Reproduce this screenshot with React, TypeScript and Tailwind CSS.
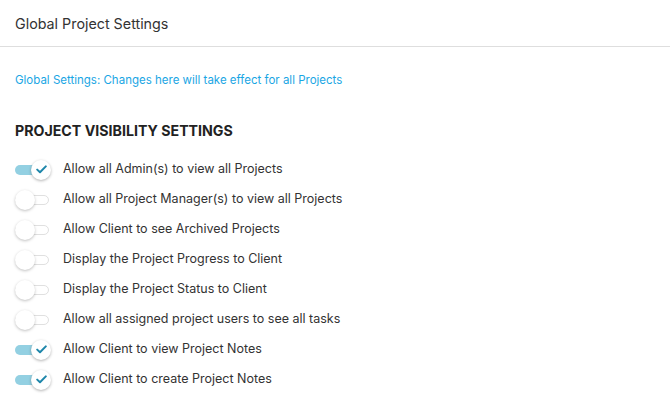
import React from "react";

const items: [string, boolean][] = [
  ["Allow all Admin(s) to view all Projects", true],
  ["Allow all Project Manager(s) to view all Projects", false],
  ["Allow Client to see Archived Projects", false],
  ["Display the Project Progress to Client", false],
  ["Display the Project Status to Client", false],
  ["Allow all assigned project users to see all tasks", false],
  ["Allow Client to view Project Notes", true],
  ["Allow Client to create Project Notes", true],
];

function Toggle({ on }: { on: boolean }) {
  return (
    <div className="relative w-[36px] h-[20px] flex items-center shrink-0">
      <div
        className={
          on
            ? "w-[34px] h-[10px] rounded-full bg-[#93d0e2]"
            : "w-[34px] h-[10px] rounded-full bg-white border border-[#e0e0e0]"
        }
      />
      <div
        className={
          on
            ? "absolute left-[16px] top-0 w-[20px] h-[20px] rounded-full bg-white shadow-[0_1px_3px_rgba(0,0,0,0.3)] flex items-center justify-center"
            : "absolute left-0 top-0 w-[20px] h-[20px] rounded-full bg-white shadow-[0_1px_3px_rgba(0,0,0,0.25)]"
        }
      >
        {on && (
          <svg width="11" height="9" viewBox="0 0 11 9">
            <path d="M1.2 4.6 L4 7.3 L9.8 1.4" fill="none" stroke="#1d86aa" strokeWidth="2" strokeLinecap="round" strokeLinejoin="round" />
          </svg>
        )}
      </div>
    </div>
  );
}

export default function App() {
  return (
    <div className="w-[670px] h-[411px] bg-white font-['Inter',sans-serif] text-[#333]">
      <div className="h-[47px] border-b border-[#dedede] flex items-center px-[15px] pt-[1px]">
        <span className="text-[14.3px] text-[#333]">Global Project Settings</span>
      </div>
      <div className="px-[15px]">
        <div className="mt-[25px] text-[11.5px] text-[#1aa6e4]">Global Settings: Changes here will take effect for all Projects</div>
        <div className="mt-[31px] text-[14.2px] font-bold text-[#222]">PROJECT VISIBILITY SETTINGS</div>
        <div className="mt-[18px] flex flex-col gap-[10px]">
          {items.map(([label, on]) => (
            <div key={label} className="flex items-center h-[20px]">
              <Toggle on={on} />
              <span className="ml-[12px] text-[12.5px] text-[#333]">{label}</span>
            </div>
          ))}
        </div>
      </div>
    </div>
  );
}
